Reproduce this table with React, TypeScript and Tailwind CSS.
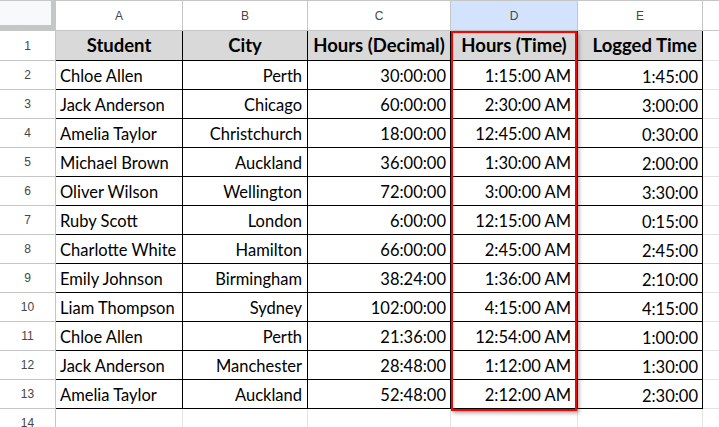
import React from "react";

type Row = [string, string, string, string, string];

const ROWS: Row[] = [
  ["Chloe Allen", "Perth", "30:00:00", "1:15:00 AM", "1:45:00"],
  ["Jack Anderson", "Chicago", "60:00:00", "2:30:00 AM", "3:00:00"],
  ["Amelia Taylor", "Christchurch", "18:00:00", "12:45:00 AM", "0:30:00"],
  ["Michael Brown", "Auckland", "36:00:00", "1:30:00 AM", "2:00:00"],
  ["Oliver Wilson", "Wellington", "72:00:00", "3:00:00 AM", "3:30:00"],
  ["Ruby Scott", "London", "6:00:00", "12:15:00 AM", "0:15:00"],
  ["Charlotte White", "Hamilton", "66:00:00", "2:45:00 AM", "2:45:00"],
  ["Emily Johnson", "Birmingham", "38:24:00", "1:36:00 AM", "2:10:00"],
  ["Liam Thompson", "Sydney", "102:00:00", "4:15:00 AM", "4:15:00"],
  ["Chloe Allen", "Perth", "21:36:00", "12:54:00 AM", "1:00:00"],
  ["Jack Anderson", "Manchester", "28:48:00", "1:12:00 AM", "1:30:00"],
  ["Amelia Taylor", "Auckland", "52:48:00", "2:12:00 AM", "2:30:00"],
];

const COLS = ["A", "B", "C", "D", "E"];

const cellFont = "font-['Lato','Liberation_Sans',sans-serif] text-[16.5px] text-black";
const boldFont = "font-['Lato','Liberation_Sans',sans-serif] text-[18.5px] font-bold text-black";
const headFont = "font-['Liberation_Sans',Arial,sans-serif] text-[12px] text-[#444746]";

function RowHeader({ n, h }: { n: number; h: string }) {
  return (
    <div className={`${h} ${headFont} flex items-center justify-center bg-white border-r border-b border-[#c4c7c5]`}>
      {n}
    </div>
  );
}

export default function App() {
  return (
    <div className="relative w-[719px] h-[427px] overflow-hidden bg-white">
      <div className="grid grid-cols-[56px_127px_125px_143px_127px_125px_1fr]">
        {/* column letters */}
        <div className="h-[31px] border-r border-b border-t border-[#c4c7c5] bg-[#c4c7c5] flex">
          <div className="w-[51px] h-[24px] bg-[#f8f9fa]" />
        </div>
        {COLS.map((c) => (
          <div
            key={c}
            className={`h-[31px] ${headFont} flex items-center justify-center border-r border-b border-t border-[#c4c7c5] ${
              c === "D" ? "bg-[#d3e3fd]" : "bg-white"
            }`}
          >
            {c}
          </div>
        ))}
        <div className="h-[31px] border-b border-t border-[#c4c7c5] bg-white" />

        {/* header row */}
        <RowHeader n={1} h="h-[30px]" />
        {["Student", "City", "Hours (Decimal)", "Hours (Time)"].map((t) => (
          <div
            key={t}
            className={`h-[30px] ${boldFont} bg-[#d9d9d9] border-r border-b border-black flex items-center justify-center whitespace-nowrap`}
          >
            {t}
          </div>
        ))}
        <div className={`h-[30px] ${boldFont} bg-[#d9d9d9] border-r border-b border-black flex items-center justify-end pr-[5px] whitespace-nowrap`}>
          Logged Time
        </div>
        <div className="h-[30px] border-b border-[#e2e3e3]" />

        {/* data rows */}
        {ROWS.map((r, i) => (
          <React.Fragment key={i}>
            <RowHeader n={i + 2} h="h-[29px]" />
            <div className={`h-[29px] ${cellFont} border-r border-b border-black flex items-center pl-[4px] pt-[2px] whitespace-nowrap`}>
              {r[0]}
            </div>
            <div className={`h-[29px] ${cellFont} border-r border-b border-black flex items-center justify-end pr-[5px] pt-[2px] whitespace-nowrap`}>
              {r[1]}
            </div>
            <div className={`h-[29px] ${cellFont} border-r border-b border-black flex items-center justify-end pr-[4px] pt-[2px]`}>
              {r[2]}
            </div>
            <div className={`h-[29px] ${cellFont} border-r border-b border-black flex items-center justify-end pr-[6px] pt-[2px] whitespace-nowrap`}>
              {r[3]}
            </div>
            <div className={`h-[29px] ${cellFont} border-r border-b border-black flex items-center justify-end pr-[4px] pt-[4px]`}>
              {r[4]}
            </div>
            <div className="h-[29px] border-b border-[#e2e3e3]" />
          </React.Fragment>
        ))}

        {/* row 14 */}
        <RowHeader n={14} h="h-[29px]" />
        <div className="h-[29px] border-r border-[#e2e3e3]" />
        <div className="h-[29px] border-r border-[#e2e3e3]" />
        <div className="h-[29px] border-r border-[#e2e3e3]" />
        <div className="h-[29px] border-r border-[#e2e3e3]" />
        <div className="h-[29px] border-r border-[#e2e3e3]" />
        <div className="h-[29px]" />
      </div>

      {/* highlight around column D */}
      <div className="absolute left-[451px] top-[31px] w-[126px] h-[380px] border-2 border-[#ff0000] shadow-[2px_2px_4px_rgba(0,0,0,0.35)] pointer-events-none" />
    </div>
  );
}
